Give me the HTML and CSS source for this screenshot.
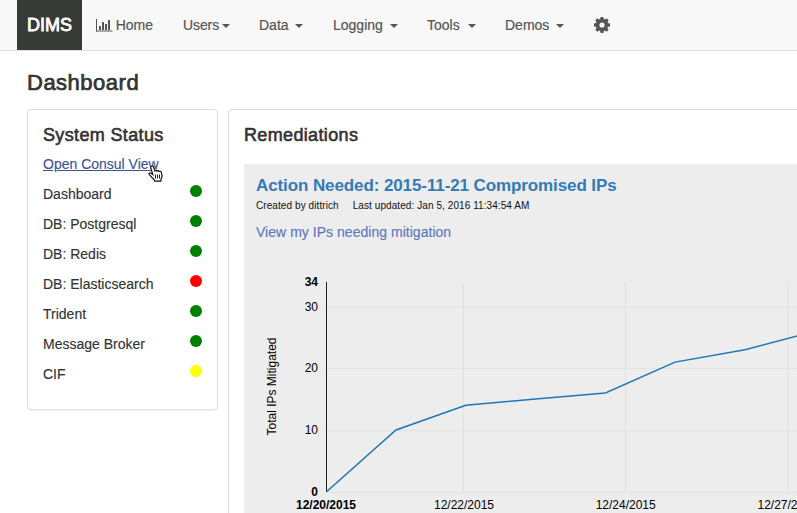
FILE: index.html
```html
<!DOCTYPE html>
<html lang="en">
<head>
<meta charset="utf-8">
<title>DIMS Dashboard</title>
<link rel="stylesheet" href="styles.css">
</head>
<body>
<nav class="navbar">
  <a class="brand">DIMS</a>
  <a class="nav-item home"><svg class="chart-icon" width="17" height="13" viewBox="0 0 17 13"><path d="M.5 0v12.5M0 12h16.5" fill="none" stroke="#555"/><path d="M3 7h2v4H3zM6 3h2v8H6zM9 5h2v6H9zM12 1h2v10h-2z" fill="#555"/></svg>Home</a>
  <a class="nav-item users">Users<i class="caret"></i></a>
  <a class="nav-item data">Data<i class="caret"></i></a>
  <a class="nav-item logging">Logging<i class="caret"></i></a>
  <a class="nav-item tools">Tools<i class="caret"></i></a>
  <a class="nav-item demos">Demos<i class="caret"></i></a>
  <a class="nav-item gear"><svg width="16" height="16" viewBox="-8 -8 16 16"><g fill="#555"><path fill-rule="evenodd" d="M0-6.2A6.2 6.2 0 1 1 0 6.2A6.2 6.2 0 1 1 0-6.2ZM0-2.6A2.6 2.6 0 1 0 0 2.6A2.6 2.6 0 1 0 0-2.6Z"/><path id="tooth" d="M-1.9-5.5L-1.4-8H1.4L1.9-5.5Z"/><use href="#tooth" transform="rotate(45)"/><use href="#tooth" transform="rotate(90)"/><use href="#tooth" transform="rotate(135)"/><use href="#tooth" transform="rotate(180)"/><use href="#tooth" transform="rotate(225)"/><use href="#tooth" transform="rotate(270)"/><use href="#tooth" transform="rotate(315)"/></g></svg></a>
</nav>
<main class="page">
  <h1 class="title">Dashboard</h1>
  <div class="columns">
    <section class="panel status">
      <h2 class="heading">System Status</h2>
      <div class="consul"><a class="consul-link">Open Consul View</a>
        <svg class="cursor" width="16" height="18" viewBox="0 0 16 18"><path d="M3.6 1.2c1-.5 1.8 0 2.1 1l1.2 3.6c.7-.7 1.7-.5 2.1.3.8-.6 1.8-.3 2.2.5.9-.5 2-.1 2.2 1l.6 3c.2 1.4-.4 2.3-.8 3.1l-.4 2.5H6.6l-.4-1.4L1.3 9.6C.5 8.6 1.5 7.4 2.6 8l2.2 1.5L2.8 3C2.6 2.2 2.8 1.6 3.6 1.2Z" fill="#fff" stroke="#111" stroke-width="1.2"/><path d="M7.5 9.5v4M9.5 9.5v4M11.5 9.5v4" stroke="#222"/></svg>
      </div>
      <ul class="services">
        <li><span>Dashboard</span><i class="dot"></i></li>
        <li><span>DB: Postgresql</span><i class="dot"></i></li>
        <li><span>DB: Redis</span><i class="dot"></i></li>
        <li><span>DB: Elasticsearch</span><i class="dot down"></i></li>
        <li><span>Trident</span><i class="dot"></i></li>
        <li><span>Message Broker</span><i class="dot"></i></li>
        <li><span>CIF</span><i class="dot warn"></i></li>
      </ul>
    </section>
    <section class="panel remediations">
      <h2 class="heading">Remediations</h2>
      <article class="card">
        <h3 class="action">Action Needed: 2015-11-21 Compromised IPs</h3>
        <p class="meta"><span>Created by dittrich</span><span>Last updated: Jan 5, 2016 11:34:54 AM</span></p>
        <a class="mitigate">View my IPs needing mitigation</a>
        <svg class="chart" width="553" height="263" viewBox="244 250 553 263">
          <path class="grid" d="M326 306.5H797M326 368.5H797M326 430.5H797M326 492.5H797M463.5 282V492M625.5 282V492M787.5 282V492"/>
          <path class="axis" d="M326.5 282V492"/>
          <path class="series" d="M326.5 491.8L396 430L465.8 405.3L535.5 399.1L605.5 393L675 362.1L745 349.7L815 331.2"/>
          <g class="ylabels">
            <text class="strong" x="318" y="286">34</text>
            <text x="318" y="311">30</text>
            <text x="318" y="372">20</text>
            <text x="318" y="434">10</text>
            <text class="strong" x="318" y="496">0</text>
          </g>
          <g class="xlabels">
            <text class="strong" x="326" y="509">12/20/2015</text>
            <text x="464" y="509">12/22/2015</text>
            <text x="625.7" y="509">12/24/2015</text>
            <text x="787.5" y="509">12/27/2015</text>
          </g>
          <text class="axis-title" transform="translate(275.7 386.5) rotate(-90)">Total IPs Mitigated</text>
        </svg>
      </article>
    </section>
  </div>
</main>
</body>
</html>
```

FILE: styles.css
```css
* { box-sizing: border-box; }
html { overflow: hidden; }
body {
  margin: 0;
  height: 513px;
  overflow: hidden;
  background: #fff;
  color: #333;
  font: 14px/20px "Liberation Sans", Arial, sans-serif;
}
h1, h2, h3, p, ul { margin: 0; padding: 0; font-weight: 400; }
.navbar {
  display: flex;
  height: 51px;
  padding-left: 17px;
  background: #f8f8f8;
  border-bottom: 1px solid #e1e1e1;
}
.brand {
  width: 65px;
  height: 50px;
  background: #383a35;
  color: #fff;
  font-size: 18px;
  line-height: 50px;
  text-align: center;
  -webkit-text-stroke: .8px #fff;
}
.nav-item {
  display: flex;
  flex: none;
  align-items: center;
  justify-content: space-between;
  height: 50px;
  color: #555;
  -webkit-text-stroke: .2px #555;
}
.home { width: 57px; margin: 0 30px 0 14px; }
.users { width: 47px; margin-right: 29px; letter-spacing: -.1px; }
.data { width: 44px; margin-right: 30px; }
.logging { width: 65px; margin-right: 29px; }
.tools { width: 49px; margin-right: 29px; }
.demos { width: 59px; margin-right: 30px; }
.caret {
  margin-top: 1px;
  border: 4px solid transparent;
  border-top-color: #555;
  border-bottom: 0;
}
.page { padding: 16px 0 0 27px; }
.title {
  height: 42px;
  font-size: 22px;
  line-height: 31px;
  letter-spacing: .5px;
  -webkit-text-stroke: .7px #333;
}
.columns { display: flex; align-items: flex-start; gap: 10px; }
.panel {
  flex: none;
  padding: 15px;
  border: 1px solid #ddd;
  border-radius: 4px;
  box-shadow: 0 1px 1px rgba(0, 0, 0, .05);
}
.status { width: 191px; height: 301px; }
.heading {
  height: 20px;
  font-size: 18px;
  letter-spacing: .35px;
  -webkit-text-stroke: .6px #333;
}
.consul { position: relative; margin-top: 9px; height: 20px; }
.consul-link {
  color: #3c5496;
  text-decoration: underline;
  -webkit-text-stroke: .15px #3c5496;
}
.cursor { position: absolute; left: 105px; top: 11px; }
.services { margin-top: 10px; list-style: none; }
.services li {
  display: flex;
  justify-content: space-between;
  height: 30px;
  -webkit-text-stroke: .15px #333;
}
.dot {
  width: 12px;
  height: 12px;
  margin-top: 1px;
  border-radius: 50%;
  background: #008000;
}
.down { background: #f00; }
.warn { background: #ff0; }
.remediations {
  width: 569px;
  height: 404px;
  padding: 15px 0 0 15px;
  border-width: 1px 0 0 1px;
  border-radius: 4px 0 0 0;
  box-shadow: none;
}
.card {
  height: 349px;
  margin-top: 19px;
  padding-top: 11px;
  background: #ededed;
}
.action {
  height: 20px;
  padding-left: 12px;
  color: #337ab7;
  font-size: 17px;
  line-height: 22px;
  font-weight: 700;
  letter-spacing: -.1px;
  white-space: nowrap;
}
.meta {
  display: flex;
  gap: 14px;
  padding: 4px 0 0 12px;
  color: #111;
  font-size: 10px;
  line-height: 13px;
  letter-spacing: .08px;
}
.mitigate {
  display: block;
  margin: 10px 0 8px;
  padding-left: 12px;
  color: #5c78bd;
  letter-spacing: .03px;
  -webkit-text-stroke: .15px #5c78bd;
}
.chart { display: block; font-size: 12px; fill: #000; }
.grid { fill: none; stroke: #e2e2e2; }
.axis { fill: none; stroke: #222; }
.series { fill: none; stroke: #1f77b4; stroke-width: 1.5; }
.strong { font-weight: 700; }
.ylabels { text-anchor: end; }
.xlabels, .axis-title { text-anchor: middle; }
```
